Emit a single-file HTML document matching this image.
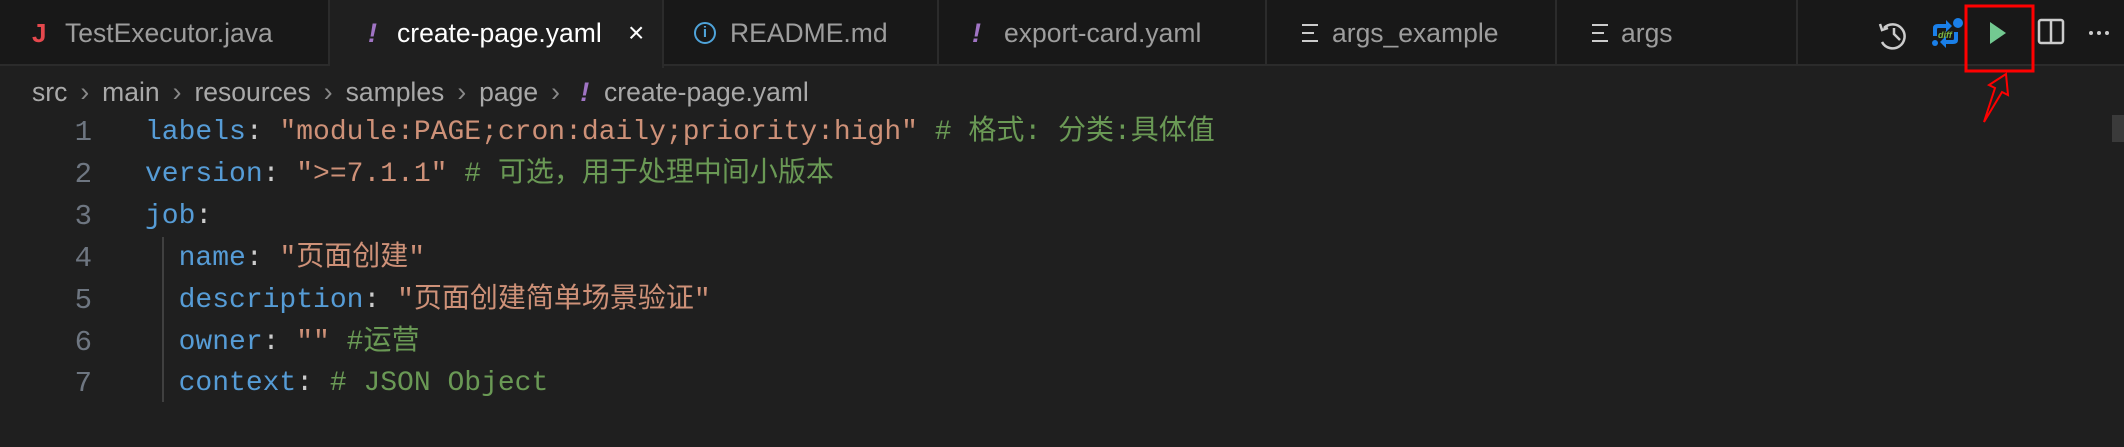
<!DOCTYPE html>
<html><head><meta charset="utf-8"><style>
*{margin:0;padding:0;box-sizing:border-box}
body{width:2124px;height:402px;background:#1f1f1f;overflow:hidden;position:relative;font-family:"Liberation Sans","Noto Sans CJK SC",sans-serif}
.bar{position:absolute;left:0;top:0;width:2124px;height:66px;background:#181818;border-bottom:2px solid #2b2b2b}
.tab{position:absolute;top:0;height:66px;border-right:2px solid #2b2b2b;color:#9d9d9d;font-size:26.5px;line-height:66px}
.tab span{position:absolute;top:0}
.act{background:#1f1f1f;color:#fff;height:68px}
.ex{color:#a074c4;font-style:italic;font-size:27px;font-weight:bold}
.crumb{position:absolute;top:74px;left:32px;font-size:26.5px;color:#a9a9a9;line-height:36px;white-space:pre}
.crumb i{font-style:normal;color:#888;margin:0 13px}
.code{position:absolute;left:0;top:112px;font-family:"Liberation Mono","Noto Sans CJK SC",monospace;font-size:28px;line-height:41.9px;white-space:pre}
.ln{position:absolute;left:60px;width:32px;text-align:right;color:#6e7681;font-size:29px}
.l{position:absolute;left:145px}
.k{color:#569cd6}.s{color:#ce9178}.c{color:#6a9955}.p{color:#cccccc}
</style></head><body>
<div class="bar">
<div class="tab" style="left:0;width:330px"><span style="left:32px;color:#e5484d;font-weight:bold;font-size:26px">J</span><span style="left:65px">TestExecutor.java</span></div>
<div class="tab act" style="left:330px;width:334px"><span class="ex" style="left:38px">!</span><span style="left:67px">create-page.yaml</span><span style="left:298px;font-size:28px">×</span></div>
<div class="tab" style="left:664px;width:275px"><span style="left:30px;top:22px;width:22px;height:22px;border:2px solid #4fa3d9;border-radius:50%;color:#4fa3d9;font-size:15px;line-height:18px;text-align:center;font-weight:bold">i</span><span style="left:66px">README.md</span></div>
<div class="tab" style="left:939px;width:328px"><span class="ex" style="left:33px">!</span><span style="left:65px">export-card.yaml</span></div>
<div class="tab" style="left:1267px;width:290px"><span style="left:35px;top:24px;width:16px;height:18px;border-top:2px solid #ccc;border-bottom:2px solid #ccc"></span><span style="left:35px;top:32px;width:12px;height:2px;background:#ccc"></span><span style="left:65px">args_example</span></div>
<div class="tab" style="left:1557px;width:241px"><span style="left:35px;top:24px;width:16px;height:18px;border-top:2px solid #ccc;border-bottom:2px solid #ccc"></span><span style="left:35px;top:32px;width:12px;height:2px;background:#ccc"></span><span style="left:64px">args</span></div>
</div>
<svg style="position:absolute;left:0;top:0" width="2124" height="402">
<g fill="none" stroke="#ccc" stroke-width="2.5">
<path d="M1884 28 A12 12 0 1 1 1882 42"/><path d="M1880 24 L1882 30 L1888 28"/><path d="M1894 28 L1894 34 L1900 40"/>
<rect x="2039" y="20" width="24" height="23" rx="2"/><path d="M2051 20 V43"/>
</g>
<g fill="#1a7fe8"><path d="M1933 36 V28 Q1933 24 1938 24 H1946 V20 L1952 26 L1946 32 V28 H1938 Q1937 28 1937 30 V36Z"/><path d="M1958 32 V40 Q1958 44 1953 44 H1946 V48 L1940 42 L1946 36 V40 H1953 Q1954 40 1954 38 V32Z"/><circle cx="1958" cy="23" r="5"/><circle cx="1935" cy="43" r="3"/></g>
<text x="1938" y="38" font-family="Liberation Sans" font-size="9" font-style="italic" font-weight="bold" fill="#7cb342">diff</text>
<path d="M1990 22 L2006 33 L1990 44Z" fill="#73c991"/>
<g fill="#ccc"><circle cx="2091" cy="33" r="2"/><circle cx="2099" cy="33" r="2"/><circle cx="2107" cy="33" r="2"/></g>
<rect x="1966" y="6" width="67" height="65" fill="none" stroke="#ff0000" stroke-width="3"/>
<path d="M1984 122 L1995 88 L1989 85 L2006 74 L2008 95 L2002 92 Z" fill="none" stroke="#ff0000" stroke-width="2"/>
<rect x="2112" y="115" width="12" height="27" fill="#3a3a3a"/>
</svg>
<div class="crumb">src<i>›</i>main<i>›</i>resources<i>›</i>samples<i>›</i>page<i>›</i> <span class="ex">!</span>  create-page.yaml</div>
<div style="position:absolute;left:162px;top:237px;width:2px;height:165px;background:#404040"></div>
<div class="code">
<div class="ln" style="top:0">1</div><div class="l" style="top:0"><span class="k">labels</span><span class="p">: </span><span class="s">"module:PAGE;cron:daily;priority:high"</span> <span class="c"># 格式: 分类:具体值</span></div>
<div class="ln" style="top:41.9px">2</div><div class="l" style="top:41.9px"><span class="k">version</span><span class="p">: </span><span class="s">"&gt;=7.1.1"</span> <span class="c"># 可选，用于处理中间小版本</span></div>
<div class="ln" style="top:83.8px">3</div><div class="l" style="top:83.8px"><span class="k">job</span><span class="p">:</span></div>
<div class="ln" style="top:125.7px">4</div><div class="l" style="top:125.7px">  <span class="k">name</span><span class="p">: </span><span class="s">"页面创建"</span></div>
<div class="ln" style="top:167.6px">5</div><div class="l" style="top:167.6px">  <span class="k">description</span><span class="p">: </span><span class="s">"页面创建简单场景验证"</span></div>
<div class="ln" style="top:209.5px">6</div><div class="l" style="top:209.5px">  <span class="k">owner</span><span class="p">: </span><span class="s">""</span> <span class="c">#运营</span></div>
<div class="ln" style="top:251.4px">7</div><div class="l" style="top:251.4px">  <span class="k">context</span><span class="p">: </span><span class="c"># JSON Object</span></div>
</div>
</body></html>
